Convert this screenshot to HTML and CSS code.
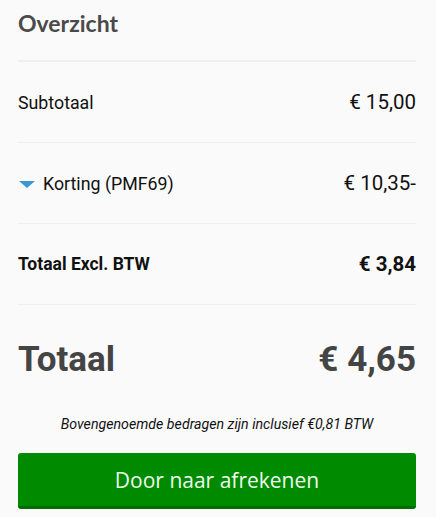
FILE: index.html
```html
<!DOCTYPE html>
<html lang="nl">
<head>
<meta charset="utf-8">
<link rel="stylesheet" href="styles.css">
</head>
<body>
<div class="summary">
  <h2 class="title">Overzicht</h2>
  <div class="row">
    <span class="label">Subtotaal</span>
    <span class="amount">€ 15,00</span>
  </div>
  <div class="row">
    <span class="label discount"><span class="caret"></span>Korting (PMF69)</span>
    <span class="amount">€ 10,35-</span>
  </div>
  <div class="row row-bold">
    <span class="label">Totaal Excl. BTW</span>
    <span class="amount">€ 3,84</span>
  </div>
  <div class="row row-total">
    <span>Totaal</span>
    <span>€ 4,65</span>
  </div>
  <p class="note">Bovengenoemde bedragen zijn inclusief €0,81 BTW</p>
  <button class="checkout">Door naar afrekenen</button>
</div>
</body>
</html>
```
FILE: styles.css
```css
html, body {
  margin: 0;
  padding: 0;
  background: #fafafa;
}
body {
  font-family: Roboto, "Liberation Sans", sans-serif;
  color: #111;
}
.summary {
  padding: 0 20px 0 18px;
}
.title {
  margin: 0;
  height: 62px;
  box-sizing: border-box;
  padding-top: 9px;
  font-family: Lato, "Open Sans", sans-serif;
  font-weight: 700;
  font-size: 23px;
  line-height: 28px;
  color: #4a4a4a;
  border-bottom: 2px solid #eeeeee;
}
.row {
  display: flex;
  justify-content: space-between;
  align-items: center;
  height: 80px;
  border-bottom: 1px solid #eeeeee;
}
.label {
  font-size: 17.8px;
}
.amount {
  font-size: 20.5px;
}
.discount {
  display: flex;
  align-items: center;
}
.caret {
  width: 0;
  height: 0;
  border-left: 8px solid transparent;
  border-right: 8px solid transparent;
  border-top: 7px solid #3a98d4;
  margin: 2px 8px 0 1px;
}
.row-bold {
  font-weight: 700;
}
.row-bold .label {
  font-size: 17.5px;
}
.row-total {
  height: 108px;
  border-bottom: none;
  font-weight: 700;
  font-size: 35px;
  color: #444;
}
.note {
  margin: 3px 0 0;
  text-align: center;
  font-style: italic;
  font-size: 14.2px;
  line-height: 17px;
}
.checkout {
  display: block;
  width: 100%;
  margin-top: 20px;
  height: 56px;
  border: none;
  border-bottom: 3px solid #006d00;
  border-radius: 3px;
  background: #008a00;
  color: #eefcee;
  font-family: "Open Sans", sans-serif;
  font-size: 21px;
  cursor: pointer;
}
```
